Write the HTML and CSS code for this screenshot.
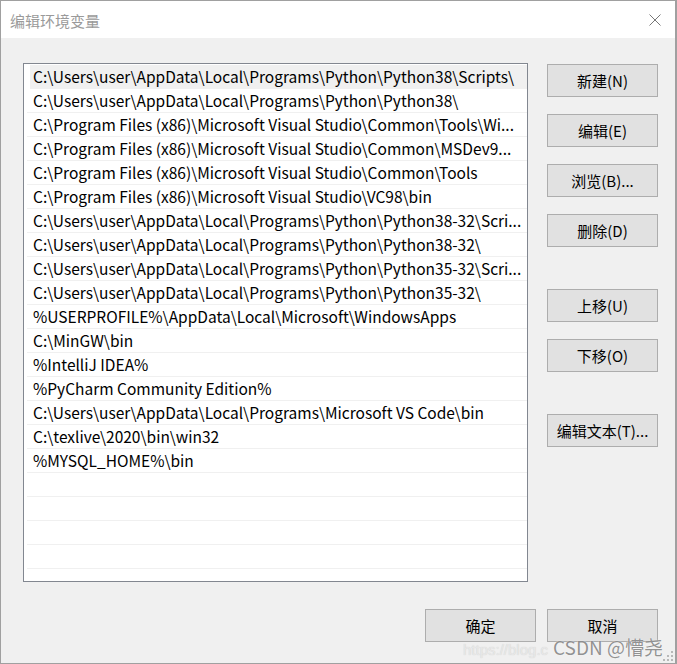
FILE: index.html
```html
<!DOCTYPE html>
<html lang="zh-CN">
<head>
<meta charset="utf-8">
<title>编辑环境变量</title>
<link rel="stylesheet" href="styles.css">
</head>
<body>
<div class="window">
  <div class="titlebar">
    <span class="title">编辑环境变量</span>
    <svg class="close" width="12" height="12" viewBox="0 0 12 12"><path d="M0.5 0.5 L11.5 11.5 M11.5 0.5 L0.5 11.5" stroke="#777" stroke-width="1" fill="none"/></svg>
  </div>
  <div class="body">
    <div class="main">
      <div class="list">
        <div class="row selected">C:\Users\user\AppData\Local\Programs\Python\Python38\Scripts\</div>
        <div class="row">C:\Users\user\AppData\Local\Programs\Python\Python38\</div>
        <div class="row">C:\Program Files (x86)\Microsoft Visual Studio\Common\Tools\Wi...</div>
        <div class="row">C:\Program Files (x86)\Microsoft Visual Studio\Common\MSDev9...</div>
        <div class="row">C:\Program Files (x86)\Microsoft Visual Studio\Common\Tools</div>
        <div class="row">C:\Program Files (x86)\Microsoft Visual Studio\VC98\bin</div>
        <div class="row">C:\Users\user\AppData\Local\Programs\Python\Python38-32\Scri...</div>
        <div class="row">C:\Users\user\AppData\Local\Programs\Python\Python38-32\</div>
        <div class="row">C:\Users\user\AppData\Local\Programs\Python\Python35-32\Scri...</div>
        <div class="row">C:\Users\user\AppData\Local\Programs\Python\Python35-32\</div>
        <div class="row">%USERPROFILE%\AppData\Local\Microsoft\WindowsApps</div>
        <div class="row">C:\MinGW\bin</div>
        <div class="row">%IntelliJ IDEA%</div>
        <div class="row">%PyCharm Community Edition%</div>
        <div class="row">C:\Users\user\AppData\Local\Programs\Microsoft VS Code\bin</div>
        <div class="row">C:\texlive\2020\bin\win32</div>
        <div class="row">%MYSQL_HOME%\bin</div>
        <div class="row"></div>
        <div class="row"></div>
        <div class="row"></div>
        <div class="row"></div>
        <div class="row"></div>
      </div>
      <div class="side">
        <div class="group">
          <button class="btn">新建(N)</button>
          <button class="btn">编辑(E)</button>
          <button class="btn">浏览(B)...</button>
          <button class="btn">删除(D)</button>
        </div>
        <div class="group">
          <button class="btn">上移(U)</button>
          <button class="btn">下移(O)</button>
        </div>
        <div class="group">
          <button class="btn">编辑文本(T)...</button>
        </div>
      </div>
    </div>
    <div class="footer">
      <button class="btn">确定</button>
      <button class="btn">取消</button>
    </div>
  </div>
  <div class="watermark"><span class="wm-url">https://blog.c</span><span class="wm-name">CSDN @懵尧</span></div>
  <svg class="grip" width="10" height="10" viewBox="0 0 10 10">
    <rect x="8" y="0" width="2" height="2" fill="#b8b8b8"/>
    <rect x="4" y="4" width="2" height="2" fill="#b8b8b8"/>
    <rect x="8" y="4" width="2" height="2" fill="#b8b8b8"/>
    <rect x="0" y="8" width="2" height="2" fill="#b8b8b8"/>
    <rect x="4" y="8" width="2" height="2" fill="#b8b8b8"/>
    <rect x="8" y="8" width="2" height="2" fill="#b8b8b8"/>
  </svg>
</div>
</body>
</html>
```

FILE: styles.css
```css
* { box-sizing: border-box; }
html, body { margin: 0; padding: 0; }
body {
  width: 677px;
  height: 664px;
  overflow: hidden;
  background: #f0f0f0;
  font-family: "Noto Sans CJK SC", "Noto Sans", sans-serif;
}
.window {
  position: relative;
  width: 677px;
  height: 664px;
  border: 1px solid #a0a0a0;
  border-right-width: 2px;
  display: flex;
  flex-direction: column;
  background: #f0f0f0;
}
.titlebar {
  height: 37px;
  flex: none;
  background: #fff;
  display: flex;
  align-items: center;
  justify-content: space-between;
  padding: 0 14px 0 9px;
}
.title {
  font-size: 15px;
  color: #9a9a9a;
  line-height: 1;
  margin-top: 1px;
}
.close { display: block; }
.body {
  flex: 1;
  display: flex;
  flex-direction: column;
  padding: 25px 17px 0 22px;
}
.main {
  display: flex;
  gap: 19px;
}
.list {
  width: 505px;
  height: 519px;
  border: 1px solid #828790;
  background: #fff;
  overflow: hidden;
  padding: 1px 0 0 3px;
}
.row {
  height: 24px;
  border-bottom: 1px solid #f0f0f0;
  font-family: "Noto Sans CJK SC", sans-serif;
  font-size: 15.5px;
  line-height: 23px;
  color: #000;
  padding-left: 6px;
  white-space: nowrap;
  overflow: hidden;
}
.row.selected {
  background: #f0f0f0;
  margin-left: 3px;
  padding-left: 3px;
}
.side {
  display: flex;
  flex-direction: column;
  padding-top: 1px;
}
.group {
  display: flex;
  flex-direction: column;
  gap: 17px;
  margin-bottom: 42px;
}
.btn {
  width: 111px;
  height: 33px;
  background: #e1e1e1;
  border: 1px solid #adadad;
  border-radius: 0;
  font-family: "Noto Sans CJK SC", sans-serif;
  font-size: 15px;
  color: #000;
  padding: 0;
  line-height: 31px;
}
.footer {
  display: flex;
  justify-content: flex-end;
  gap: 11px;
  margin-top: 27px;
}
.watermark {
  position: absolute;
  left: 462px;
  top: 632px;
  display: flex;
  align-items: baseline;
  white-space: nowrap;
  pointer-events: none;
}
.wm-url {
  font-family: "Liberation Sans", sans-serif;
  font-size: 15px;
  color: rgba(235, 235, 235, 0.9);
  text-shadow: 0 0 1px #c8c8c8;
  width: 90px;
}
.wm-name {
  font-family: "Noto Sans CJK SC", sans-serif;
  font-size: 19px;
  color: rgba(110, 110, 110, 0.75);
  text-shadow: 0 0 1px #fff;
}
.grip {
  position: absolute;
  right: 2px;
  bottom: 2px;
}
```
